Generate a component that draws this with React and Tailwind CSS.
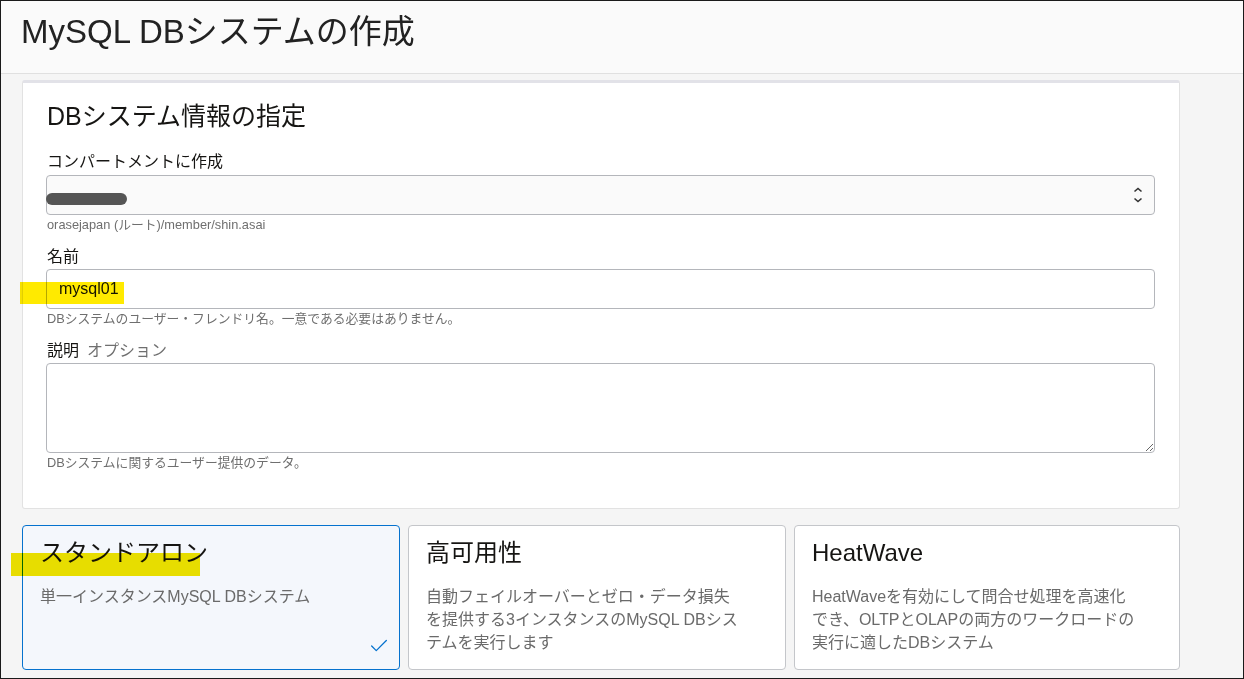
import { Check } from "lucide-react"

const font = { fontFamily: '"Liberation Sans", "Noto Sans CJK JP", sans-serif' }

function Field({ label, optional, help, children }) {
  return (
    <div className="flex flex-col">
      <label className="pl-[1px] text-[16px] leading-[24px] text-[#161513]">
        {label}
        {optional && <span className="ml-2 text-[#6f6f6f]">{optional}</span>}
      </label>
      {children}
      <p className="mt-[2px] pl-[1px] text-[12.8px] leading-[16px] text-[#6f6f6f]">{help}</p>
    </div>
  )
}

function Tile({ title, lines, selected }) {
  return (
    <div
      className={`relative h-[145px] rounded-[4px] border px-[17px] pt-[11px] ${
        selected ? "border-[#0572ce] bg-[#f4f7fc]" : "border-[#c4c6ca] bg-white"
      }`}
    >
      <h3 className="text-[24px] leading-[32px] text-[#161513]">{title}</h3>
      <div className="mt-[16px] text-[16px] leading-[23px] text-[#6a6a6a]">
        {lines.map((l) => (
          <div key={l}>{l}</div>
        ))}
      </div>
      {selected && (
        <Check className="absolute right-[9px] bottom-[12px] h-[22px] w-[22px] text-[#0572ce]" strokeWidth={1.4} />
      )}
    </div>
  )
}

export default function App() {
  return (
    <div style={font} className="relative h-[679px] w-[1244px] overflow-hidden border border-[#1a1a1a] bg-[#f5f5f5]">
      {/* ヘッダー */}
      <div className="flex h-[73px] items-center border-b border-[#e0e0e0] bg-[#fafafa] pl-[20px]">
        <h1 className="pb-[10px] text-[33px] leading-[40px] text-[#222]">MySQL DBシステムの作成</h1>
      </div>

      <div className="w-[1179px] pl-[21px] pt-[6px]">
        {/* DBシステム情報 */}
        <div className="rounded-[3px] border border-t-[3px] border-[#e2e2e2] border-t-[#e2e2e8] bg-white pl-[23px] pr-[24px] pt-[17px] pb-[37px]">
          <h2 className="pl-[1px] text-[25px] leading-[32px] text-[#161513]">DBシステム情報の指定</h2>

          <div className="mt-[18px] flex flex-col gap-[12px]">
            <Field label="コンパートメントに作成" help="orasejapan (ルート)/member/shin.asai">
              <div className="mt-[1px] flex h-[40px] items-center justify-between rounded-[4px] border border-[#b4b6bb] bg-[#fafafa] pr-[10px]">
                <div className="-ml-[1px] mt-[7px] h-[12px] w-[81px] rounded-full bg-[#555555]" />
                <svg width="12" height="20" viewBox="0 0 12 20" fill="none" stroke="#333" strokeWidth="1.6">
                  <path d="M2.5 6.5 L6 3.5 L9.5 6.5" />
                  <path d="M2.5 13.5 L6 16.5 L9.5 13.5" />
                </svg>
              </div>
            </Field>

            <Field label="名前" help="DBシステムのユーザー・フレンドリ名。一意である必要はありません。">
              <div className="flex h-[40px] items-center rounded-[4px] border border-[#b4b6bb] bg-white pl-[12px] text-[16px] text-[#161513]">
                mysql01
              </div>
            </Field>

            <Field label="説明" optional="オプション" help="DBシステムに関するユーザー提供のデータ。">
              <textarea
                className="h-[90px] w-full resize rounded-[4px] border border-[#b4b6bb] bg-white outline-none"
                defaultValue=""
              />
            </Field>
          </div>
        </div>

        {/* シェイプ選択 */}
        <div className="mt-[16px] grid grid-cols-[378px_378px_1fr] gap-2">
          <Tile selected title="スタンドアロン" lines={["単一インスタンスMySQL DBシステム"]} />
          <Tile
            title="高可用性"
            lines={["自動フェイルオーバーとゼロ・データ損失", "を提供する3インスタンスのMySQL DBシス", "テムを実行します"]}
          />
          <Tile
            title="HeatWave"
            lines={["HeatWaveを有効にして問合せ処理を高速化", "でき、OLTPとOLAPの両方のワークロードの", "実行に適したDBシステム"]}
          />
        </div>
      </div>

      {/* 黄色のマーカー */}
      <div className="pointer-events-none absolute left-[19px] top-[281px] h-[22px] w-[104px] bg-[#ffea00] mix-blend-multiply" />
      <div className="pointer-events-none absolute left-[10px] top-[552px] h-[23px] w-[189px] bg-[#f2e500] mix-blend-multiply" />
    </div>
  )
}
